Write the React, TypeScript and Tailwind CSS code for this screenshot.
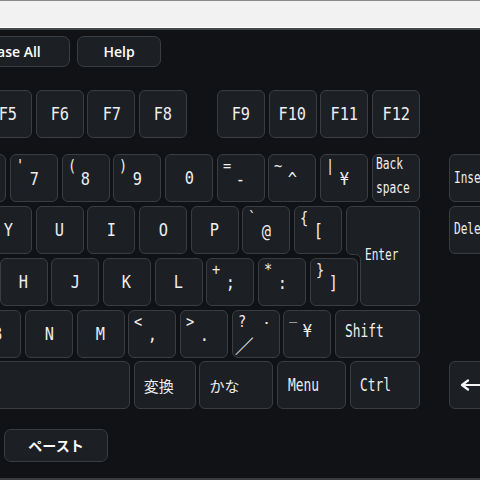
import React from "react";

const mono = "font-['DejaVu_Sans_Mono',monospace]";
const keyBase =
  "relative shrink-0 h-[48px] rounded-[6px] border border-[#3a3d42] bg-[#1c1f24] text-[#eeeeee]";
const mainLegend =
  "inline-block font-['DejaVu_Sans_Mono',monospace] text-[18px] leading-none scale-x-[0.85]";
const shiftLegend =
  "absolute top-[3px] left-[5px] font-['DejaVu_Sans_Mono',monospace] text-[16px] leading-none scale-x-[0.85] origin-left";
const modLegend =
  "inline-block font-['DejaVu_Sans_Mono',monospace] text-[17px] leading-none scale-x-[0.76] origin-left";
const cjk = "font-['Noto_Sans_CJK_JP',sans-serif]";

function Key({
  w = "w-[48px]",
  extra = "",
  children,
}: {
  w?: string;
  extra?: string;
  children?: React.ReactNode;
}) {
  return <div className={`${keyBase} ${w} ${extra}`}>{children}</div>;
}

function CKey({ label, extra = "" }: { label: string; extra?: string }) {
  return (
    <Key extra={`flex items-center justify-center ${extra}`}>
      <span className={mainLegend}>{label}</span>
    </Key>
  );
}

function DKey({ shift, label }: { shift: string; label: string }) {
  return (
    <Key extra="flex items-center justify-center">
      <span className={shiftLegend}>{shift}</span>
      <span className={`${mainLegend} mt-[2px]`}>{label}</span>
    </Key>
  );
}

function ModKey({ w, label, pl = "pl-[10px]", jp = false }: { w: string; label: string; pl?: string; jp?: boolean }) {
  return (
    <Key w={w} extra={`flex items-center ${pl}`}>
      {jp ? (
        <span className={`${cjk} text-[15px] leading-none`}>{label}</span>
      ) : (
        <span className={modLegend}>{label}</span>
      )}
    </Key>
  );
}

function EnterKey() {
  return (
    <div className="relative shrink-0 w-[74px] h-[100px]">
      <svg className="absolute inset-0" width="74" height="100" viewBox="0 0 74 100">
        <path
          d="M 6 0.5 H 68 A 5.5 5.5 0 0 1 73.5 6 V 94 A 5.5 5.5 0 0 1 68 99.5 H 20 A 5.5 5.5 0 0 1 14.5 94 V 53.5 A 5 5 0 0 0 9.5 48.5 H 6 A 5.5 5.5 0 0 1 0.5 43 V 6 A 5.5 5.5 0 0 1 6 0.5 Z"
          fill="#1c1f24"
          stroke="#3a3d42"
          strokeWidth="1"
        />
      </svg>
      <div className="relative h-full flex items-center pl-[19px] text-[#eeeeee]">
        <span className="inline-block font-['DejaVu_Sans_Mono',monospace] text-[15px] leading-none scale-x-[0.74] origin-left">
          Enter
        </span>
      </div>
    </div>
  );
}

export default function App() {
  return (
    <div className="w-[480px] h-[480px] overflow-hidden bg-[#111215] flex flex-col">
      {/* top light strip */}
      <div className="h-[28px] shrink-0 bg-[#f2f2f2] border-t border-[#8a8a8a] border-b border-b-white" />
      <div className="h-[2px] shrink-0 bg-[#45474a]" />

      {/* buttons */}
      <div className="mt-[6px] flex gap-[7px] h-[31px] shrink-0">
        <div className="ml-[-46px] w-[116px] shrink-0 rounded-[7px] border border-[#3a3d42] bg-[#1c1f24] flex items-center justify-center text-white font-['Open_Sans',sans-serif] font-semibold text-[14px]">
          Erase All
        </div>
        <div className="w-[84px] shrink-0 rounded-[7px] border border-[#3a3d42] bg-[#1c1f24] flex items-center justify-center text-white font-['Open_Sans',sans-serif] font-semibold text-[14px]">
          Help
        </div>
      </div>

      {/* F row */}
      <div className="mt-[23px] flex gap-[3.7px] ml-[-16px] shrink-0">
        <CKey label="F5" />
        <CKey label="F6" />
        <CKey label="F7" />
        <CKey label="F8" />
        <CKey label="F9" extra="ml-[26.2px]" />
        <CKey label="F10" />
        <CKey label="F11" />
        <CKey label="F12" />
      </div>

      {/* main block */}
      <div className="mt-[16px] flex shrink-0">
        <div className="w-[420px] shrink-0 flex flex-col gap-[3.75px]">
          {/* number row */}
          <div className="flex gap-[3.7px] ml-[-41.7px]">
            <DKey shift="&" label="6" />
            <DKey shift="'" label="7" />
            <DKey shift="(" label="8" />
            <DKey shift=")" label="9" />
            <CKey label="0" />
            <DKey shift="=" label="-" />
            <DKey shift="~" label="^" />
            <DKey shift="|" label="¥" />
            <Key extra="flex flex-col justify-between pl-[3px] pt-[2px] pb-[5px]">
              <span className="inline-block font-['DejaVu_Sans_Mono',monospace] text-[15px] leading-none scale-x-[0.75] origin-left">
                Back
              </span>
              <span className="inline-block font-['DejaVu_Sans_Mono',monospace] text-[15px] leading-none scale-x-[0.75] origin-left">
                space
              </span>
            </Key>
          </div>

          {/* rows 2 & 3 with Enter */}
          <div className="flex">
            <div className="w-[346px] shrink-0 flex flex-col gap-[3.75px]">
              <div className="flex gap-[3.7px] ml-[-16px]">
                <CKey label="Y" />
                <CKey label="U" />
                <CKey label="I" />
                <CKey label="O" />
                <CKey label="P" />
                <DKey shift="`" label="@" />
                <DKey shift="{" label="[" />
              </div>
              <div className="flex gap-[3.7px] ml-[-0.5px]">
                <CKey label="H" />
                <CKey label="J" />
                <CKey label="K" />
                <CKey label="L" />
                <DKey shift="+" label=";" />
                <DKey shift="*" label=":" />
                <DKey shift="}" label="]" />
              </div>
            </div>
            <EnterKey />
          </div>

          {/* row 4 */}
          <div className="flex gap-[3.7px] ml-[-26.7px]">
            <CKey label="B" />
            <CKey label="N" />
            <CKey label="M" />
            <DKey shift="<" label="," />
            <DKey shift=">" label="." />
            <Key>
              <span className={shiftLegend}>?</span>
              <span className="absolute top-[5px] right-[9px] font-['DejaVu_Sans_Mono',monospace] text-[14px] leading-none">
                ･
              </span>
              <span className={`absolute left-[2px] bottom-[2px] ${cjk} text-[19px] leading-none`}>／</span>
            </Key>
            <Key extra="flex items-center justify-center">
              <span className="absolute top-[10px] left-[5px] font-['DejaVu_Sans_Mono',monospace] text-[16px] leading-none scale-x-[0.85] origin-left">
                ‾
              </span>
              <span className={`${mainLegend} -mt-[6px]`}>¥</span>
            </Key>
            <Key w="w-[84.8px]" extra="flex items-center pl-[9px] pb-[4px]">
              <span className={modLegend}>Shift</span>
            </Key>
          </div>

          {/* row 5 */}
          <div className="flex gap-[3.7px]">
            <Key w="w-[330px]" extra="ml-[-200px]" />
            <ModKey w="w-[62px]" label="変換" pl="pl-[9px]" jp />
            <ModKey w="w-[74px]" label="かな" pl="pl-[9px]" jp />
            <ModKey w="w-[69px]" label="Menu" pl="pl-[10px]" />
            <ModKey w="w-[70.2px]" label="Ctrl" pl="pl-[9px]" />
          </div>
        </div>

        {/* right column */}
        <div className="ml-[29px] flex flex-col gap-[3.75px] shrink-0">
          <Key extra="flex items-center pl-[4px]">
            <span className="inline-block font-['DejaVu_Sans_Mono',monospace] text-[15px] leading-none scale-x-[0.74] origin-left">
              Insert
            </span>
          </Key>
          <Key extra="flex items-center pl-[4px]">
            <span className="inline-block font-['DejaVu_Sans_Mono',monospace] text-[15px] leading-none scale-x-[0.74] origin-left">
              Delete
            </span>
          </Key>
          <div className="h-[48px]" />
          <div className="h-[48px]" />
          <Key extra="flex items-center pl-[10px]">
            <svg width="34" height="12" viewBox="0 0 34 12">
              <path d="M 2 6 L 8 1.5 M 2 6 L 8 10.5 M 2.5 6 H 34" stroke="#f4f4f4" strokeWidth="2.2" fill="none" strokeLinecap="round" />
            </svg>
          </Key>
        </div>
      </div>

      {/* paste */}
      <div className="mt-[20px] flex shrink-0">
        <div className="ml-[4px] w-[104px] h-[33px] rounded-[7px] border border-[#3a3d42] bg-[#1c1f24] flex items-center justify-center text-white font-['Noto_Sans_CJK_JP',sans-serif] font-bold text-[14px]">
          ペースト
        </div>
      </div>

      <div className="mt-auto h-[2px] bg-[#3a3b3e] shrink-0" />
    </div>
  );
}
